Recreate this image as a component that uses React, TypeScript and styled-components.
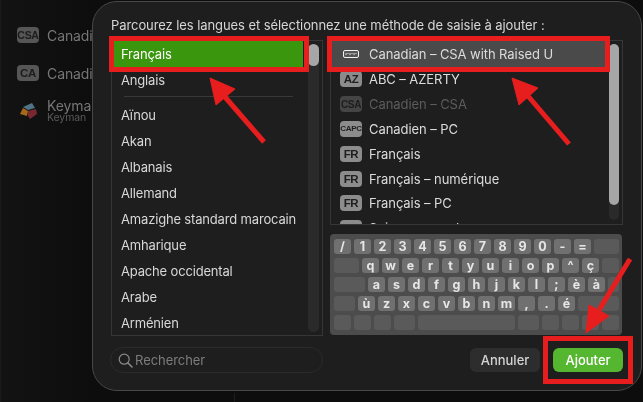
import React from "react";
import styled, { createGlobalStyle } from "styled-components";

const Global = createGlobalStyle`
  html, body { margin: 0; padding: 0; background: #111; }
  body { font-family: Inter, "Liberation Sans", sans-serif; -webkit-font-smoothing: antialiased; }
`;

const Page = styled.div`
  position: relative;
  display: flex;
  width: 643px;
  height: 402px;
  overflow: hidden;
  background: linear-gradient(90deg, #131313 0, #0f0f0f 60px, #0d0d0d 92px);
  border-left: 1px solid #1b1b1b;
  box-sizing: border-box;
  filter: blur(0.3px);
  &::after {
    content: "";
    position: absolute;
    left: 233px;
    top: 393px;
    width: 1px;
    height: 9px;
    background: #1d1d1d;
  }
`;

const Sidebar = styled.aside`
  flex: none;
  width: 91px;
  overflow: hidden;
  padding: 27px 0 0 16px;
  box-sizing: border-box;
  display: flex;
  flex-direction: column;
  gap: 22px;
`;

const SideRow = styled.div`
  display: flex;
  align-items: center;
  gap: 8px;
  height: 16px;
  white-space: nowrap;
  color: #767676;
  font-size: 14px;
  letter-spacing: -0.1px;
`;

const SideBadge = styled.span`
  flex: none;
  width: 22px;
  height: 16px;
  border-radius: 4px;
  background: #565656;
  color: #1c1c1c;
  font: 700 ${(p: { $size: number }) => p.$size}px "Liberation Sans", sans-serif;
  letter-spacing: -0.3px;
  display: flex;
  align-items: center;
  justify-content: center;
`;

const SideIcon = styled.svg`
  flex: none;
  width: 22px;
  height: 18px;
`;

const SideText = styled.div`
  line-height: 12px;
  padding-top: 2px;
`;

const SideSub = styled.div`
  font-size: 10.5px;
  line-height: 12px;
  color: #5a5a5a;
`;

const Dialog = styled.section`
  flex: none;
  margin-top: 1px;
  width: 550px;
  height: 390px;
  box-sizing: border-box;
  border: 1px solid #474747;
  border-radius: 25px;
  background: #1e1e1e;
  padding: 14px 18px 0;
  display: flex;
  flex-direction: column;
`;

const Title = styled.h1`
  margin: 0;
  font-weight: 400;
  font-size: 13px;
  line-height: 18px;
  letter-spacing: -0.08px;
  color: #d6d6d6;
  white-space: nowrap;
`;

const Columns = styled.div`
  margin-top: 6px;
  display: grid;
  grid-template-columns: 212px 293px;
  column-gap: 7px;
  height: 296px;
`;

const ListBox = styled.div`
  display: flex;
  box-sizing: border-box;
  border: 1px solid #363636;
  overflow: hidden;
  height: ${(p: { $h: number }) => p.$h}px;
`;

const List = styled.ul`
  flex: 1;
  min-width: 0;
  list-style: none;
  margin: 0;
  padding: 0;
  overflow: hidden;
`;

const LangRow = styled.li<{ $active?: boolean }>`
  height: 26px;
  line-height: 26px;
  margin: 0 5px 0 1px;
  padding-left: 8px;
  font-size: 13px;
  letter-spacing: -0.17px;
  color: ${(p) => (p.$active ? "#ffffff" : "#d8d8d8")};
  background: ${(p) => (p.$active ? "#3a960c" : "transparent")};
  white-space: nowrap;
`;

const Separator = styled.li`
  height: 9px;
  box-sizing: border-box;
  padding: 3px 15px 0 12px;
  &::before {
    content: "";
    display: block;
    height: 1px;
    background: #383838;
  }
`;

const Track = styled.div<{ $w: number; $h: number; $thumb: number }>`
  flex: none;
  align-self: flex-start;
  width: ${(p) => p.$w}px;
  height: ${(p) => p.$h}px;
  margin: 3px 3px 0 0;
  border-radius: 6px;
  background: #2a2a2a;
  &::before {
    content: "";
    display: block;
    height: ${(p) => p.$thumb}px;
    border-radius: 6px;
    background: #a6a6a6;
  }
`;

const MethodRow = styled.li<{ $active?: boolean; $dim?: boolean }>`
  display: flex;
  align-items: center;
  gap: 7px;
  height: ${(p) => (p.$active ? 26 : 24.8)}px;
  margin-right: 4px;
  padding-left: 9px;
  font-size: 13px;
  letter-spacing: -0.07px;
  white-space: nowrap;
  color: ${(p) => (p.$dim ? "#5c5c5c" : "#dcdcdc")};
  background: ${(p) => (p.$active ? "#4a4a4a" : "transparent")};
`;

const Badge = styled.span<{ $dim?: boolean; $size: number }>`
  flex: none;
  width: 22px;
  height: 16px;
  border-radius: 4px;
  background: ${(p) => (p.$dim ? "#454545" : "#8c8c8c")};
  color: #1e1e1e;
  font: 700 ${(p) => p.$size}px "Liberation Sans", sans-serif;
  letter-spacing: -0.3px;
  display: flex;
  align-items: center;
  justify-content: center;
`;

const KeyboardGlyph = styled.svg`
  flex: none;
  width: 22px;
  height: 16px;
`;

const RightColumn = styled.div`
  display: flex;
  flex-direction: column;
  gap: 9px;
`;

const Board = styled.div`
  width: 292px;
  height: 101px;
  box-sizing: border-box;
  padding: 5px 3px 0 4px;
  border-radius: 4px;
  background: #4c4c4c;
  display: flex;
  flex-direction: column;
  gap: 4px;
`;

const KeyRow = styled.div`
  display: flex;
  gap: 3px;
`;

const Key = styled.span<{ $w: number; $lit: boolean }>`
  flex: none;
  width: ${(p) => p.$w}px;
  height: 15px;
  border-radius: 3px;
  background: ${(p) => (p.$lit ? "#707070" : "#5a5a5a")};
  color: #e6e6e6;
  font: 700 12.5px/15px Inter, "Liberation Sans", sans-serif;
  text-align: center;
`;

const Footer = styled.footer`
  margin: 11px 0 0 -1px;
  display: flex;
  align-items: center;
`;

const Search = styled.div`
  width: 213px;
  height: 26px;
  box-sizing: border-box;
  border: 1px solid #2b2b2b;
  border-radius: 13px;
  padding-left: 7px;
  display: flex;
  align-items: center;
  gap: 2px;
  color: #7c7c7c;
  font-size: 13px;
  letter-spacing: -0.05px;
`;

const Actions = styled.div`
  margin-left: auto;
  display: flex;
  gap: 13px;
`;

const Button = styled.button<{ $primary?: boolean }>`
  width: 70px;
  height: 24px;
  padding: 0;
  border: 0;
  border-radius: 6px;
  font: 500 13px Inter, "Liberation Sans", sans-serif;
  color: ${(p) => (p.$primary ? "#ffffff" : "#d4d4d4")};
  background: ${(p) => (p.$primary ? "#55b62f" : "#2d2d2d")};
`;

const RedBox = styled.div<{ $x: number; $y: number; $w: number; $h: number }>`
  position: absolute;
  left: ${(p) => p.$x}px;
  top: ${(p) => p.$y}px;
  width: ${(p) => p.$w}px;
  height: ${(p) => p.$h}px;
  box-sizing: border-box;
  border: 5px solid #e81e1e;
`;

const Arrows = styled.svg`
  position: absolute;
  left: 0;
  top: 0;
  pointer-events: none;
`;

const leftTop = ["Français", "Anglais"];
const leftRest = [
  "Aïnou", "Akan", "Albanais", "Allemand", "Amazighe standard marocain",
  "Amharique", "Apache occidental", "Arabe", "Arménien",
];

const methods = [
  { badge: "AZ", size: 11.5, name: "ABC – AZERTY" },
  { badge: "CSA", size: 10, name: "Canadien – CSA", dim: true },
  { badge: "CAPC", size: 8, name: "Canadien – PC" },
  { badge: "FR", size: 11.5, name: "Français" },
  { badge: "FR", size: 11.5, name: "Français – numérique" },
  { badge: "FR", size: 11.5, name: "Français – PC" },
  { badge: "", size: 11, name: "Suisse romand" },
];

type K = [string, number];
const L = (s: string): K => [s, 17];
const rows: K[][] = [
  [..."/1234567890-=".split("").map(L), ["", 25]],
  [["", 25], ..."qwertyuiop^ç".split("").map(L), ["", 17]],
  [["", 31], ..."asdfghjkl;èà".split("").map(L), ["", 11]],
  [["", 21], ..."ùzxcvbnm,.é".split("").map(L), ["", 41]],
  [["", 17], ["", 17], ["", 17], ["", 21], ["", 97], ["", 21], ["", 17], ["", 17], ["", 17], ["", 17]],
];

export default function App() {
  return (
    <Page>
      <Global />
      <Sidebar>
        <SideRow><SideBadge $size={10.5}>CSA</SideBadge>Canadien – CSA</SideRow>
        <SideRow><SideBadge $size={11.5}>CA</SideBadge>Canadien – PC</SideRow>
        <SideRow>
          <SideIcon viewBox="0 0 22 18">
            <polygon points="6,5 15,1 18,6 11,8" fill="#4f7488" />
            <polygon points="3,12 6,6 11,9 10,14" fill="#a8681a" />
            <polygon points="11,9 19,7 20,12 13,17 11,14" fill="#7a2830" />
          </SideIcon>
          <SideText>Keyman<SideSub>Keyman</SideSub></SideText>
        </SideRow>
      </Sidebar>

      <Dialog>
        <Title>Parcourez les langues et sélectionnez une méthode de saisie à ajouter :</Title>
        <Columns>
          <ListBox $h={296}>
            <List>
              {leftTop.map((l, i) => <LangRow key={l} $active={i === 0}>{l}</LangRow>)}
              <Separator />
              {leftRest.map((l) => <LangRow key={l}>{l}</LangRow>)}
            </List>
            <Track $w={11} $h={288} $thumb={22} />
          </ListBox>
          <RightColumn>
            <ListBox $h={185}>
              <List>
                <MethodRow $active>
                  <KeyboardGlyph viewBox="0 0 22 16">
                    <rect x="3.5" y="4.5" width="15" height="7" rx="1.5" fill="#555" stroke="#f2f2f2" />
                    <path d="M6 7v2M8 7v1M10 7v2M12 7v1M14 7v2M16 7v1" stroke="#e0e0e0" />
                  </KeyboardGlyph>
                  Canadian – CSA with Raised U
                </MethodRow>
                {methods.map((m, i) => (
                  <MethodRow key={i} $dim={m.dim}>
                    <Badge $dim={m.dim} $size={m.size}>{m.badge}</Badge>
                    {m.name}
                  </MethodRow>
                ))}
              </List>
              <Track $w={10} $h={176} $thumb={161} />
            </ListBox>
            <Board>
              {rows.map((r, i) => (
                <KeyRow key={i}>
                  {r.map(([c, w], j) => <Key key={j} $w={w} $lit={c !== ""}>{c}</Key>)}
                </KeyRow>
              ))}
            </Board>
          </RightColumn>
        </Columns>
        <Footer>
          <Search>
            <svg width="15" height="15" viewBox="0 0 15 15" fill="none" stroke="#8a8a8a" strokeWidth="1.2">
              <circle cx="6.2" cy="6.2" r="5" />
              <path d="M10 10l4 4" strokeLinecap="round" strokeWidth="1.6" />
            </svg>
            Rechercher
          </Search>
          <Actions>
            <Button>Annuler</Button>
            <Button $primary>Ajouter</Button>
          </Actions>
        </Footer>
      </Dialog>

      <RedBox $x={108} $y={36} $w={200} $h={36} />
      <RedBox $x={326} $y={36} $w={283} $h={36} />
      <RedBox $x={542} $y={336} $w={90} $h={48} />

      <Arrows width="643" height="402" viewBox="0 0 643 402">
        <g fill="#e81e1e" stroke="#e81e1e">
          <polygon points="209,78 234,89 215,105" />
          <path d="M224,97L263,142" strokeWidth="5" />
          <polygon points="511,78 537,88 518,105" />
          <path d="M527,96L568,144" strokeWidth="5" />
          <polygon points="585,333 608,316 588,305" />
          <path d="M598,310L629,259" strokeWidth="5" />
        </g>
      </Arrows>
    </Page>
  );
}
